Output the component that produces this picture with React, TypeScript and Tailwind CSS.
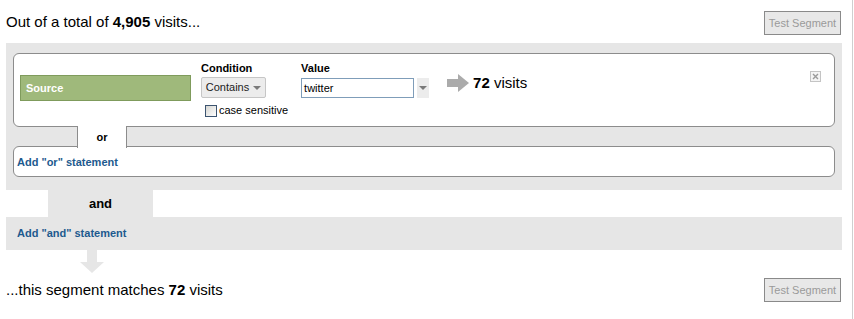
// App.tsx - segment builder
function TestButton() {
  return (
    <button className="w-[77px] h-[24px] border border-[#8a8a8a] bg-[#e8e8e8] text-[11px] leading-none text-[#9a9a9a]">
      Test Segment
    </button>
  );
}

function Caret() {
  return (
    <svg width="8" height="4" viewBox="0 0 8 4">
      <polygon points="0,0 8,0 4,4" fill="#7a7a7a" />
    </svg>
  );
}

export default function App() {
  return (
    <div className="w-[853px] h-[319px] border-r border-[#cfcfcf] bg-white text-black font-['Liberation_Sans',Arial,sans-serif]">
      {/* header */}
      <div className="h-[43px] pt-[11px] pl-[6px] pr-[11px] flex items-start justify-between">
        <p className="text-[15px] leading-[22px]">
          Out of a total of <b>4,905</b> visits...
        </p>
        <TestButton />
      </div>

      {/* or-group panel */}
      <div className="ml-[6px] w-[836px] bg-[#e6e6e6] pt-[10px] pb-[13px] px-[7px]">
        <div className="h-[74px] rounded-[6px] border border-[#8c8c8c] bg-white pt-[8px] pl-[6px] pr-[13px] flex items-start">
          <div className="mt-[13px] w-[171px] h-[26px] bg-[#9fb97b] border border-[#7f9b5c] flex items-center pl-[5px] text-[11px] font-bold text-white">
            Source
          </div>

          <div className="ml-[10px] flex flex-col">
            <span className="text-[11px] leading-[13px] font-bold">Condition</span>
            <button className="mt-[2px] w-[65px] h-[21px] rounded-[2px] border border-[#c6c6c6] bg-[#ececec] flex items-center justify-center gap-[4px] text-[11px] text-[#222]">
              Contains <Caret />
            </button>
            <label className="mt-[6px] ml-[4px] flex items-center text-[11px] leading-[13px]">
              <span className="w-[12px] h-[12px] border border-[#3c5470] bg-gradient-to-br from-[#d6d6d2] to-white" />
              <span className="ml-[2px]">case sensitive</span>
            </label>
          </div>

          <div className="ml-[13px] flex flex-col">
            <span className="text-[11px] leading-[13px] font-bold">Value</span>
            <div className="mt-[3px] flex items-center">
              <div className="w-[113px] h-[20px] border border-[#7f9db9] flex items-center pl-[2px] text-[11px]">
                twitter
              </div>
              <div className="ml-[3px] w-[12px] h-[20px] bg-[#ececec] flex items-center justify-center">
                <Caret />
              </div>
            </div>
          </div>

          <div className="ml-[18px] mt-[12px] flex items-center">
            <svg width="22" height="18" viewBox="0 0 22 18">
              <rect x="0" y="5" width="12" height="8" fill="#ababab" />
              <polygon points="11,0 22,9 11,18" fill="#ababab" />
            </svg>
            <span className="ml-[4px] text-[15px] leading-[18px]">
              <b>72</b> visits
            </span>
          </div>

          <div className="ml-auto mt-[9px]">
            <svg width="11" height="11" viewBox="0 0 11 11">
              <rect x="0.5" y="0.5" width="10" height="10" fill="#f4f4f4" stroke="#c4c4c4" />
              <path d="M3 3 L8 8 M8 3 L3 8" stroke="#9a9a9a" strokeWidth="1.4" />
            </svg>
          </div>
        </div>

        {/* or connector */}
        <div className="h-[20px]">
          <div className="relative z-10 -my-px ml-[64px] w-[50px] h-[22px] bg-white border-x border-[#8c8c8c] flex items-center justify-center text-[11px] font-bold">
            or
          </div>
        </div>

        <div className="h-[31px] rounded-[6px] border border-[#8c8c8c] bg-white flex items-center pl-[3px] pt-px">
          <a className="text-[11px] font-bold text-[#1d5a8e]">Add "or" statement</a>
        </div>
      </div>

      {/* and connector */}
      <div className="ml-[48px] w-[105px] h-[27px] bg-[#e6e6e6] flex items-center justify-center text-[13px] font-bold">
        and
      </div>
      <div className="ml-[6px] w-[836px] h-[33px] bg-[#e6e6e6] flex items-center pl-[11px]">
        <a className="text-[11px] font-bold text-[#1d5a8e]">Add "and" statement</a>
      </div>

      <svg className="ml-[80px]" width="24" height="23" viewBox="0 0 24 23">
        <rect x="7" y="0" width="10" height="12" fill="#e6e6e6" />
        <polygon points="0,12 24,12 12,23" fill="#e6e6e6" />
      </svg>

      {/* footer */}
      <div className="pt-[5px] pl-[6px] pr-[11px] flex items-center justify-between">
        <p className="text-[15px] leading-[24px]">
          ...this segment matches <b>72</b> visits
        </p>
        <TestButton />
      </div>
    </div>
  );
}
